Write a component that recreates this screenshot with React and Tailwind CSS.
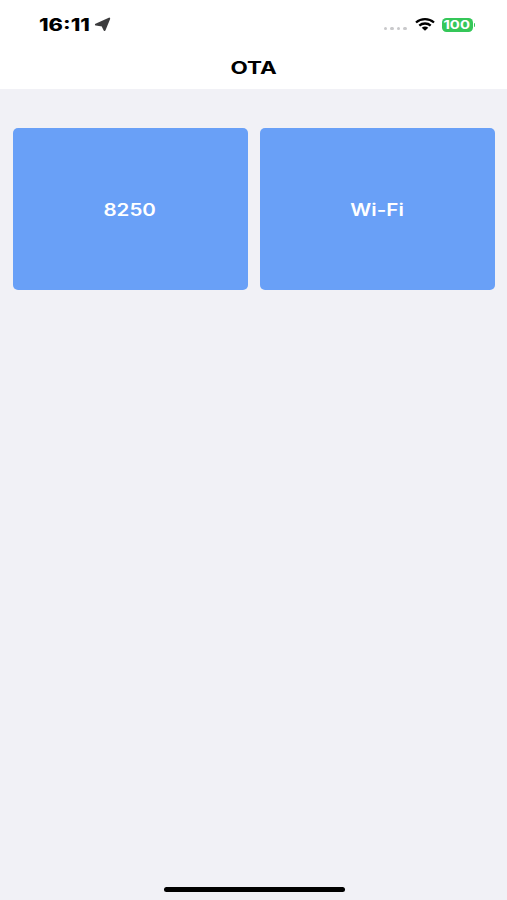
import React from 'react';

const devices = [
  { id: 'ble', name: '8250' },
  { id: 'wifi', name: 'Wi-Fi' },
];

const StatusBar = () => (
  <div className="flex h-[49px] items-center justify-between pl-[39px] pr-[32px]">
    <div className="flex items-center">
      <div className="w-[55px]">
        <span className="inline-block origin-left scale-x-[1.28] text-[17px] leading-6 font-extrabold">16:11</span>
      </div>
      <svg width="17" height="15" viewBox="0 0 17 15" className="text-[#3c3c3e]">
        <path
          d="M15.2 1.6 10.6 13 8.4 8.6 1.9 7.6Z"
          fill="currentColor"
          stroke="currentColor"
          strokeWidth="2"
          strokeLinejoin="round"
        />
      </svg>
    </div>

    <div className="flex items-center">
      {/* Cellular */}
      <div className="mt-[8px] mr-[8px] flex gap-[3px]">
        <span className="h-[3.5px] w-[3.5px] rounded-full bg-[#c9c9cb]" />
        <span className="h-[3.5px] w-[3.5px] rounded-full bg-[#c9c9cb]" />
        <span className="h-[3.5px] w-[3.5px] rounded-full bg-[#c9c9cb]" />
        <span className="h-[3.5px] w-[3.5px] rounded-full bg-[#c9c9cb]" />
      </div>

      {/* Wi-Fi */}
      <svg width="20" height="13" viewBox="0 0 20 13" fill="none" stroke="#000" strokeWidth="2.3" className="mr-[7px]">
        <path d="M1 4.5C6 0.1 14 0.1 19 4.5" />
        <path d="M4.3 7.6C7.4 4.8 12.6 4.8 15.7 7.6" />
        <path d="M6.7 9.8Q10 7.2 13.3 9.8L10 12.8Z" fill="#000" stroke="none" />
      </svg>

      {/* Battery */}
      <div className="flex items-center gap-px">
        <div className="flex h-[14px] w-[31px] items-center justify-center rounded-[4.5px] bg-[#35c759]">
          <span className="inline-block scale-x-[1.24] text-[12px] leading-[12px] font-bold text-white">100</span>
        </div>
        <span className="h-[4px] w-[1.5px] rounded-r-full bg-[#35c759]" />
      </div>
    </div>
  </div>
);

const App = () => {
  return (
    <div className="flex h-[900px] w-[507px] flex-col overflow-hidden bg-[#f1f1f6] font-['Inter',sans-serif] text-black">
      <header className="h-[89px] bg-white">
        <StatusBar />
        <h1 className="text-center text-[17px] leading-[38px] font-bold">
          <span className="inline-block scale-x-[1.32]">OTA</span>
        </h1>
      </header>

      <main className="grid flex-1 grid-cols-2 content-start gap-3 pt-[39px] pr-3 pl-[12.5px]">
        {devices.map((device) => (
          <button
            key={device.id}
            className="flex h-[162px] items-center justify-center rounded-[5px] bg-[#69a0f7] pt-[3px] text-[17px] font-semibold text-white"
          >
            <span className="inline-block scale-x-[1.21]">{device.name}</span>
          </button>
        ))}
      </main>

      {/* Home indicator */}
      <div className="flex justify-center pb-[8px] pl-px">
        <div className="h-[5px] w-[181px] rounded-full bg-black" />
      </div>
    </div>
  );
};

export default App;
